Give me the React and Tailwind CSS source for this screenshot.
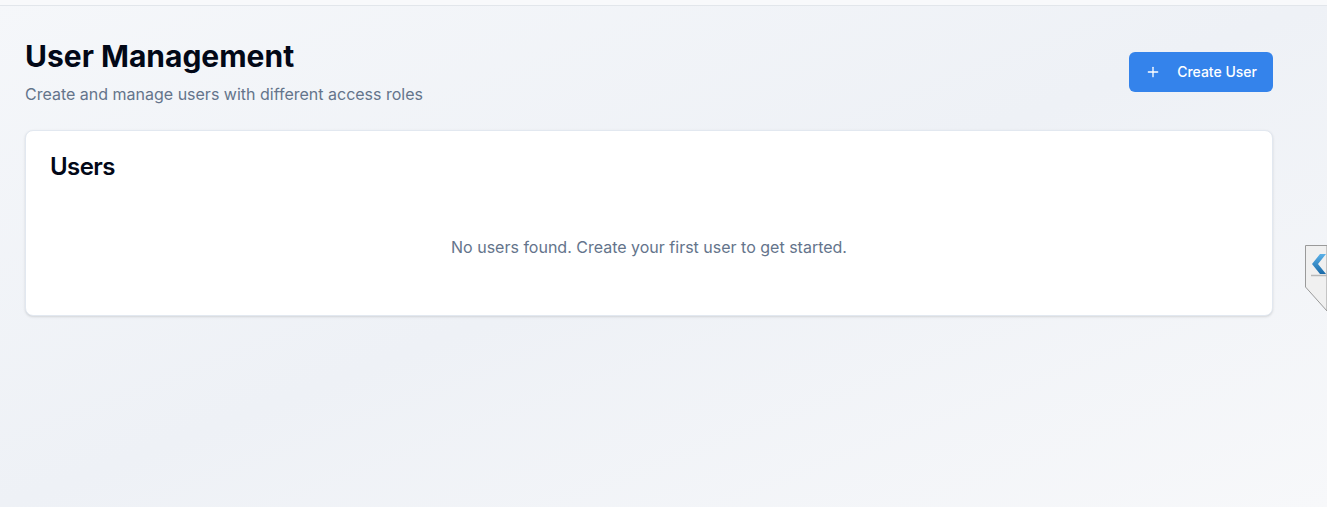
import React from "react";

export default function App() {
  return (
    <div
      className="relative min-h-screen w-full overflow-hidden bg-gradient-to-br from-[#f5f7fa] via-[#eef1f6] to-[#f7f8fa]"
      style={{ fontFamily: "Inter, 'Noto Sans', sans-serif" }}
    >
      <div className="h-[6px] w-full border-b border-[#e2e6eb] bg-[#f8f9fb]" />
      <div className="pl-[25px] pt-8">
        <div className="w-[1248px]">
          <div className="mb-6 flex items-center justify-between">
            <div>
              <h1 className="text-3xl font-bold text-[#020817]">User Management</h1>
              <p className="mt-2 text-base text-[#64748b]">Create and manage users with different access roles</p>
            </div>
            <button className="flex h-10 items-center rounded-md bg-[#3483eb] px-4 text-sm font-medium text-white">
              <svg width="16" height="16" viewBox="0 0 24 24" fill="none" stroke="currentColor" strokeWidth="2" strokeLinecap="round" strokeLinejoin="round" className="mr-4">
                <path d="M5 12h14" />
                <path d="M12 5v14" />
              </svg>
              Create User
            </button>
          </div>
          <div className="rounded-lg border border-[#e2e8f0] bg-white shadow-sm">
            <div className="flex flex-col p-6">
              <h3 className="text-2xl font-semibold leading-none tracking-tight text-[#020817]">Users</h3>
            </div>
            <div className="p-6 pt-0">
              <div className="py-8 text-center text-base text-[#64748b]">
                No users found. Create your first user to get started.
              </div>
            </div>
          </div>
        </div>
      </div>
      <svg className="absolute right-0 top-[245px]" width="22" height="66" viewBox="0 0 22 66">
        <defs>
          <linearGradient id="chev" x1="0" y1="0" x2="0" y2="1">
            <stop offset="0" stopColor="#5ab0e8" />
            <stop offset="1" stopColor="#1a6aa8" />
          </linearGradient>
        </defs>
        <polygon points="0.5,0.5 22,0.5 22,66 0.5,42" fill="#f0f0f0" stroke="#9a9a9a" strokeWidth="1" />
        <path d="M15 9 L7 19 L15 29 L21 29 L13 19 L21 9 Z" fill="url(#chev)" />
        <line x1="6" y1="30.5" x2="22" y2="30.5" stroke="#b8b8b8" strokeWidth="1.5" />
      </svg>
    </div>
  );
}
